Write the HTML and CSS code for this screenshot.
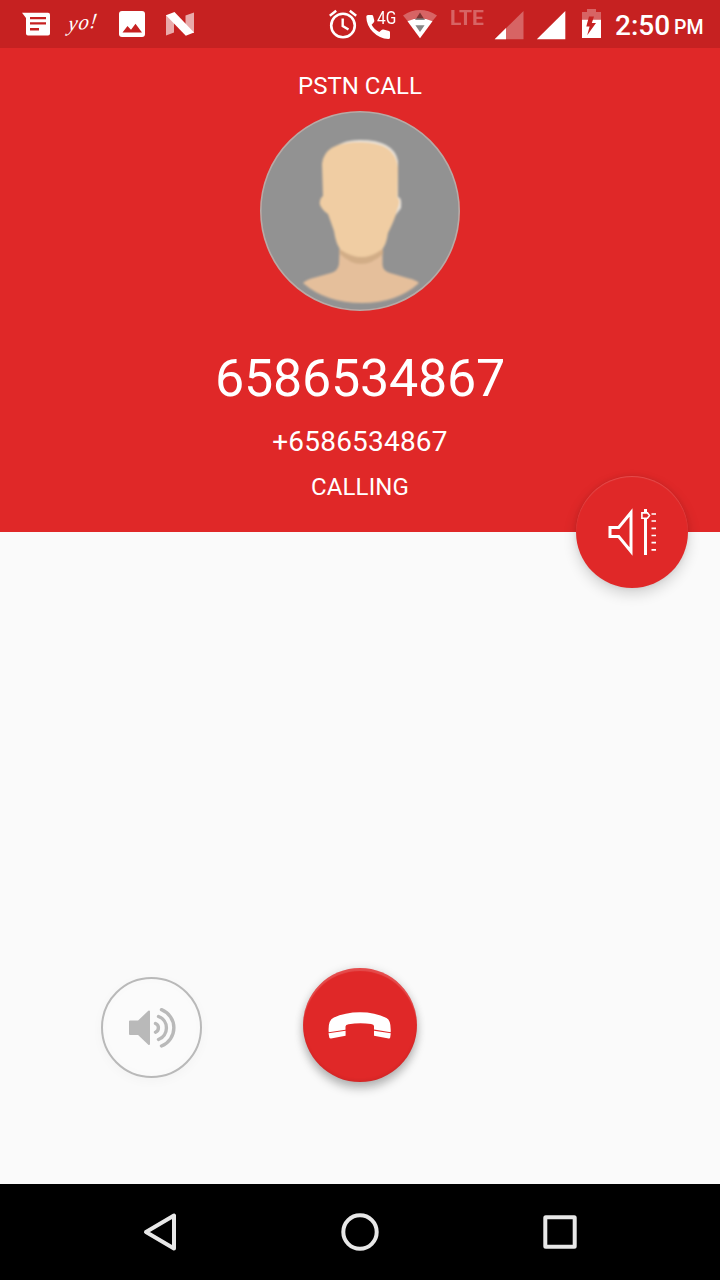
FILE: index.html
```
<!DOCTYPE html>
<html lang="en">
<head>
<meta charset="utf-8">
<title>PSTN Call</title>
<link rel="stylesheet" href="styles.css">
</head>
<body>
<div class="screen">
  <div class="status">
    <div class="notifications">
      <svg width="28" height="48" viewBox="22 0 28 48"><path fill="#fff" fill-rule="evenodd" d="M22 12.7H48Q50 12.7 50 14.7V33.5Q50 35.5 48 35.5H28Q26 35.5 26 33.5V18ZM30 17V19.3H46V17ZM30 22.2V24.6H46V22.2ZM30 28V30.5H39V28Z"/></svg>
      <span class="yo">yo!</span>
      <svg width="26" height="48" viewBox="119 0 26 48"><rect x="119" y="11" width="26" height="26" rx="3" fill="#fff"/><path fill="#c62121" d="M122.5 32.5 127.5 26 131 29.8 135.5 23.8 142 32.5Z"/></svg>
      <svg width="28" height="48" viewBox="166 0 28 48"><path fill="#fff" opacity=".62" d="M166 15V35.5L174 32.5V15ZM194 12.5 185.5 15.5V33H194Z"/><path fill="#fff" d="M166 15.2 174.5 12 194 32.5 185.8 35.8Z"/></svg>
    </div>
    <div class="system">
      <svg width="28" height="48" viewBox="329 0 28 48"><circle cx="343" cy="25.5" r="11.8" fill="none" stroke="#fff" stroke-width="2.6"/><path fill="none" stroke="#fff" stroke-width="2.4" d="M342.7 18.5V26L348.5 29.5M329.8 15.7 336.2 10.7M349.8 10.7 356.2 15.7"/></svg>
      <div class="phone">
        <svg width="25" height="48" viewBox="366 0 25 48"><path fill="#fff" d="M368 15H371.8Q373 15 373.2 16.2L374.3 20.5Q374.5 21.6 373.7 22.4L371.6 24.7Q374.6 30 379.3 32L381.6 30Q382.3 29.3 383.4 29.6L389 31Q390 31.3 390 32.4V37.5Q390 39 388.4 39Q379.5 38.6 373 32Q366.5 25.5 366.3 16.7Q366.3 15 368 15Z"/></svg>
        <span class="net">4G</span>
      </div>
      <svg class="wifi" width="34" height="48" viewBox="403 0 34 48"><path fill="#fff" opacity=".3" d="M403 15.4Q420 4.5 437 15.4L432 21.4Q420 14.5 408 21.4Z"/><path fill="#fff" d="M407.5 21.2Q420 15.2 432.5 21.2L420 38.3Z"/><path fill="#7e3332" d="M415.4 19.8 420 12.6 424.6 19.8Z"/><path fill="#888" d="M415.5 18.5H424.5V20H415.5ZM415.4 25.2H424.6L420 32Z"/></svg>
      <span class="lte">LTE</span>
      <svg class="signal-one" width="30" height="48" viewBox="494 0 30 48"><path fill="#fff" opacity=".3" d="M523.5 11V39.3H494.7Z"/><path fill="#fff" d="M506 28V39.3H494.7Z"/></svg>
      <svg class="signal-two" width="30" height="48" viewBox="536 0 30 48"><path fill="#fff" d="M565.3 11V39.3H536.8Z"/></svg>
      <svg class="battery" width="20" height="48" viewBox="582 0 20 48"><path fill="#fff" opacity=".3" d="M582 12H587V9H596V12H601V19.7H582Z"/><path fill="#fff" d="M582 19.7H601V38H582Z"/><path fill="#c62121" d="M589 16.5H594L591.8 23H596L587.2 35.2 589.6 26.4H586.3Z"/></svg>
      <span class="time">2:50</span><span class="meridiem">PM</span>
    </div>
  </div>
  <div class="caller">
    <div class="kind">PSTN CALL</div>
    <svg class="avatar" width="200" height="200" viewBox="0 0 200 200">
      <defs><filter id="soft" x="-10%" y="-10%" width="120%" height="120%"><feGaussianBlur stdDeviation=".8"/></filter></defs>
      <circle cx="100" cy="100" r="99.2" fill="#929292" stroke="#b8aaa6" stroke-width="1.6"/>
      <g filter="url(#soft)">
        <path fill="#e5bf9b" d="M80 130H122.500V154Q123 160 130 162L149 167.500Q156 169 159 172Q137 192 102 192Q66 192 43 172Q47 168 55 166.500L71 162Q78 160 79 153Z"/>
        <path fill="#d2ad87" d="M79 139H123V143Q101 163 80 143Z"/>
        <path fill="#e9e4dc" d="M72 40Q80 29 100 29Q134 29 138 50V86Q142 86 141 97L135 105Z"/>
        <path fill="#f0cda3" d="M63 85L62 53Q64 31 100 31Q136 31 138 57L137.500 87Q141 88 138 97L136 103Q134 110 128 122Q126 136 121 139Q102 153 81 139Q76 134 74 120L68 103Q63 100 60 94Q59 88 63 85Z"/>
      </g>
    </svg>
    <div class="number">6586534867</div>
    <div class="full-number">+6586534867</div>
    <div class="state">CALLING</div>
    <button class="volume" aria-label="Volume">
      <svg width="112" height="112" viewBox="576 476 112 112"><path fill="none" stroke="#fff" stroke-width="3" d="M610 527.500H618.700L631 512.500V551.500L618.700 536.500H610Z"/><path fill="#fff" d="M644 509H647V555H644Z"/><path fill="#e02828" stroke="#fff" stroke-width="1.600" d="M641.900 512.900H647.500L649.500 515.500 647.500 518.300H641.900Z"/><path stroke="#fff" stroke-width="1.700" d="M651.500 514H656M651.500 521H656M651.500 528.300H656M651.500 535.500H656M651.500 542.600H656M651.500 549.900H656"/></svg>
    </button>
  </div>
  <div class="controls">
    <button class="speaker" aria-label="Speaker">
      <svg width="50" height="44" viewBox="127 1006 50 44"><path fill="#b9b9b9" stroke="#b9b9b9" stroke-width="2" stroke-linejoin="round" d="M130 1021.500H138.500L149 1011.500V1044L138.500 1034H130Z"/><path fill="none" stroke="#b9b9b9" stroke-width="3.400" stroke-linecap="round" d="M155.500 1023.500A4.700 4.700 0 0 1 155.500 1032.200M158.500 1016.500A12.300 12.300 0 0 1 158.500 1039.500M161.500 1009.700A19.500 19.500 0 0 1 161.500 1046"/></svg>
    </button>
    <button class="hangup" aria-label="End call">
      <svg width="64" height="30" viewBox="328 1010 64 30"><path fill="#fff" d="M328.700 1032.200Q327.800 1020.500 333.500 1017.800Q345 1012.300 360 1012.300Q375 1012.300 386.500 1018Q391.200 1020.200 390.700 1032.200L374 1029.500V1026Q374 1024.300 371 1024Q360 1022.500 348.500 1024.200Q345.600 1024.700 345.500 1026.500V1029.700ZM328.500 1033.300 345.600 1030.800V1035.800L331 1038.500Q329.600 1038.600 329.300 1037.500ZM374 1030.800 390.800 1033.300 390.200 1037.500Q390 1038.600 388.700 1038.400L374 1035.800Z"/></svg>
    </button>
  </div>
  <div class="nav">
    <svg width="36" height="40" viewBox="142 1212 36 40"><path fill="none" stroke="#e8e8e8" stroke-width="4" stroke-linejoin="round" d="M146 1232 174 1215.500V1248.500Z"/></svg>
    <svg width="40" height="40" viewBox="340 1212 40 40"><circle cx="360" cy="1232" r="16.700" fill="none" stroke="#e8e8e8" stroke-width="4"/></svg>
    <svg width="36" height="40" viewBox="542 1212 36 40"><rect x="545.300" y="1217.300" width="29.400" height="29.400" rx=".5" fill="none" stroke="#e8e8e8" stroke-width="4" stroke-linejoin="round"/></svg>
  </div>
</div>
</body>
</html>
```
FILE: styles.css
```
* { box-sizing: border-box; }
body { margin: 0; font-family: Roboto, sans-serif; color: #fff; }
svg { display: block; flex: none; }
button { border: 0; padding: 0; font: inherit; }

.screen { width: 720px; height: 1280px; display: flex; flex-direction: column; background: #fafafa; overflow: hidden; }

.status { height: 48px; flex: none; display: flex; justify-content: space-between; padding: 0 15px 0 22px; background: #c62121; }
.notifications, .system { display: flex; height: 48px; }
.yo { width: 34px; margin: 0 17px 0 18px; font: italic 21px/44px "Liberation Serif", serif; letter-spacing: 1px; transform: rotate(-6deg) skewX(-14deg); }
.notifications svg:last-child { margin-left: 21px; }

.phone { position: relative; width: 30px; margin-left: 9px; }
.net { position: absolute; left: 10.5px; top: 7px; font-size: 18px; line-height: 22px; transform: scaleX(.86); transform-origin: left; }
.wifi { margin-left: 7px; }
.lte { width: 37px; margin-left: 13px; font-size: 21px; font-weight: 700; line-height: 36px; opacity: .3; }
.signal-one { margin-left: 7px; }
.signal-two { margin-left: 12px; }
.battery { margin-left: 16px; }
.time { width: 59px; margin-left: 13px; font-size: 28px; font-weight: 500; line-height: 51px; white-space: nowrap; }
.meridiem { width: 31px; font-size: 19.5px; font-weight: 500; line-height: 56px; }

.caller { position: relative; height: 484px; flex: none; display: flex; flex-direction: column; align-items: center; padding-top: 24px; background: #e02828; }
.kind, .state { font-size: 24px; line-height: 28px; }
.avatar { margin-top: 11px; }
.number { margin-top: 37px; font-size: 52px; line-height: 61px; letter-spacing: -.2px; }
.full-number { margin-top: 16px; font-size: 28px; line-height: 33px; letter-spacing: .2px; }
.state { margin-top: 15px; letter-spacing: .15px; }
.volume { position: absolute; right: 32px; bottom: -56px; width: 112px; height: 112px; border-radius: 50%; background: #e02828; box-shadow: 0 6px 14px rgba(0,0,0,.16), 0 0 5px rgba(0,0,0,.08), inset 0 1px 1px rgba(255,255,255,.18); }

.controls { flex: 1; display: flex; align-items: flex-end; gap: 101px; padding: 0 0 102px 101px; }
.speaker, .hangup { display: flex; align-items: center; justify-content: center; border-radius: 50%; }
.speaker { width: 101px; height: 101px; margin-bottom: 4px; border: 2px solid #b9b9b9; background: #fbfbfb; box-shadow: 0 3px 12px rgba(0,0,0,.03), inset 0 0 16px rgba(0,0,0,.01); }
.hangup { width: 114px; height: 114px; background: #e02828; box-shadow: 0 7px 10px rgba(0,0,0,.22), 0 1px 10px rgba(0,0,0,.14), inset 0 3px 1px rgba(255,255,255,.17), inset 0 -2px 3px rgba(0,0,0,.06); }

.nav { height: 96px; flex: none; display: flex; justify-content: space-between; align-items: center; padding: 0 142px; background: #000; }
```
